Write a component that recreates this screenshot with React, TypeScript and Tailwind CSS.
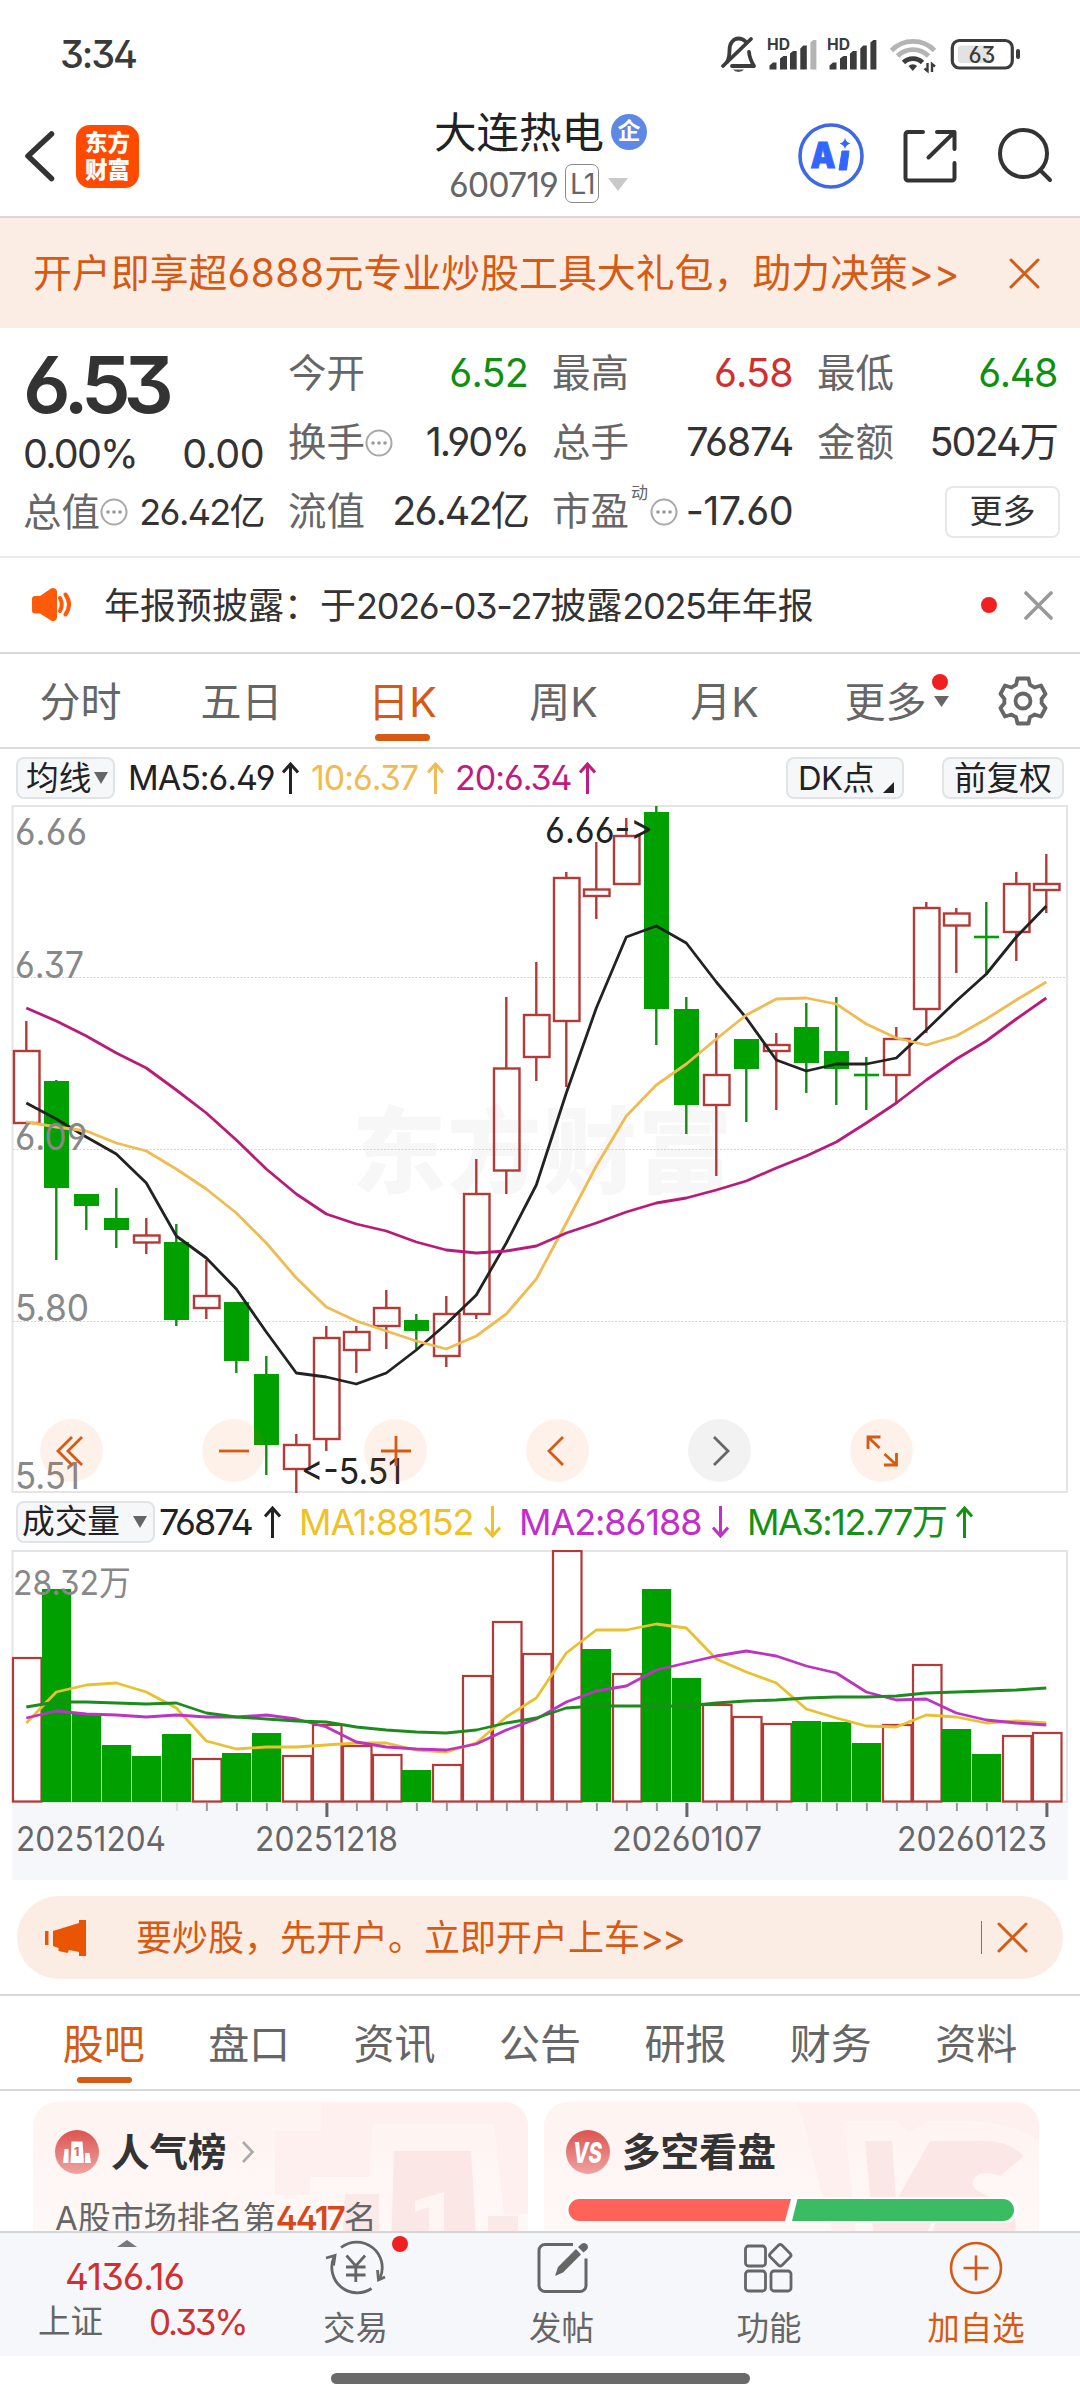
import type { ReactNode } from "react";

const UP = "#b43a37";
const DOWN = "#00a000";

// [up, high, bodyTop, bodyBottom, low] in chart pixels
const candles: [number, number, number, number, number][] = [
  [1, 1021, 1051, 1123, 1123],
  [0, 1080, 1081, 1188, 1260],
  [0, 1194, 1194, 1206, 1230],
  [0, 1188, 1218, 1230, 1248],
  [1, 1218, 1235.5, 1242.5, 1254],
  [0, 1224, 1242, 1320, 1326],
  [1, 1260, 1296, 1308, 1319],
  [0, 1302, 1302, 1361, 1373],
  [0, 1356, 1374, 1445, 1475],
  [1, 1434, 1445, 1469, 1493],
  [1, 1326, 1338, 1439, 1451],
  [1, 1326, 1332, 1350, 1373],
  [1, 1290, 1308, 1326, 1349],
  [0, 1314, 1320, 1331, 1349],
  [1, 1296, 1314, 1356, 1367],
  [1, 1159, 1194, 1314, 1319],
  [1, 997, 1068.5, 1170.5, 1194],
  [1, 962, 1015, 1057, 1081],
  [1, 872, 878, 1021, 1087],
  [1, 842, 889.5, 896, 919],
  [1, 818, 836, 884, 884],
  [0, 806, 812, 1009, 1045],
  [0, 997, 1009, 1105, 1134],
  [1, 1033, 1075, 1105, 1176],
  [0, 1039, 1039, 1069, 1122],
  [1, 1033, 1045, 1051, 1110],
  [0, 1003, 1027, 1063, 1093],
  [0, 997, 1051, 1069, 1105],
  [0, 1057, 1073.7, 1076.3, 1110],
  [1, 1027, 1039, 1075, 1104],
  [1, 902, 908, 1009, 1033],
  [1, 908, 913.5, 925.5, 973],
  [0, 902, 935.7, 938.3, 973],
  [1, 872, 884, 932, 961],
  [1, 854, 884, 890, 913],
];

const ma5 = [1103, 1119, 1137, 1154, 1183, 1236, 1258, 1289, 1332, 1373, 1377, 1384, 1373, 1350, 1324, 1295, 1243, 1185, 1093, 1008, 937, 926, 943, 982, 1018, 1060, 1071, 1064, 1064, 1058, 1030, 1001, 974, 937, 906];
const ma10 = [1122, 1127, 1131, 1143, 1151, 1169, 1189, 1213, 1243, 1278, 1307, 1321, 1331, 1341, 1349, 1336, 1314, 1279, 1223, 1166, 1116, 1085, 1064, 1039, 1015, 999, 998, 1004, 1024, 1038, 1045, 1036, 1019, 1000, 982];
const ma20 = [1008, 1021, 1036, 1053, 1068, 1090, 1113, 1140, 1169, 1194, 1214, 1224, 1231, 1242, 1250, 1253, 1251, 1246, 1233, 1223, 1212, 1203, 1198, 1190, 1181, 1168, 1156, 1142, 1123, 1103, 1080, 1059, 1041, 1019, 998];

const volTops = [1658, 1589, 1713, 1745, 1756, 1734, 1759, 1753, 1733, 1756, 1725, 1746, 1755, 1770, 1765, 1676, 1622, 1654, 1551, 1649, 1674, 1589, 1678, 1705, 1717, 1724, 1721, 1722, 1743, 1725, 1665, 1729, 1754, 1736, 1733];
// volume bars follow the change against the previous close, so a few differ from their candle
const volFlipped = [4, 19, 24, 31];
const vma1 = [1723, 1692, 1685, 1683, 1692, 1708, 1741, 1749, 1747, 1747, 1745, 1743, 1743, 1750, 1752, 1743, 1717, 1698, 1653, 1630, 1630, 1624, 1628, 1659, 1672, 1683, 1709, 1718, 1726, 1727, 1715, 1717, 1723, 1721, 1723];
const vma2 = [1718, 1711, 1714, 1715, 1717, 1715, 1717, 1717, 1715, 1719, 1727, 1742, 1747, 1749, 1750, 1744, 1730, 1719, 1702, 1691, 1686, 1670, 1663, 1656, 1651, 1656, 1666, 1673, 1692, 1700, 1699, 1713, 1720, 1723, 1725];
const vma3 = [1707, 1702, 1702, 1703, 1704, 1703, 1713, 1717, 1719, 1721, 1722, 1727, 1730, 1732, 1733, 1730, 1723, 1718, 1708, 1706, 1706, 1706, 1706, 1703, 1701, 1700, 1698, 1697, 1697, 1696, 1693, 1692, 1691, 1690, 1688];

const x = (i: number) => 26.3 + 30 * i;
const line = (ys: number[]) => ys.map((y, i) => `${x(i)},${y}`).join(" ");

function StatusBar() {
  return (
    <div className="flex h-[108px] items-center justify-between pl-[60px] pr-[58px]">
      <div className="text-[38px] font-medium leading-none tracking-[-0.055em] text-[#3a3a3a]">3:34</div>
      <svg width="304" height="44" viewBox="718 32 304 44" fill="none">
        <g stroke="#3c3c3c" strokeWidth="3.8" strokeLinecap="round">
          <path d="M727 62c2.500-4 2.500-8 2.500-12 0-7 4-11.500 9-11.500 3 0 5 1 7 3M749 52c.3 5 2 9 5 14h-22" strokeLinejoin="round" />
          <path d="M723 66L751 39" />
        </g>
        <path d="M733 69.500h11a6 4 0 0 1-11 0z" fill="#555" />
        {[0, 60].map((dx) => (
          <g key={dx} fill="#3c3c3c">
            <text x={767 + dx} y="50" fontSize="15.500" fontWeight="700" textLength="23" lengthAdjust="spacingAndGlyphs">HD</text>
            <path d={`M${769.5 + dx} 69.500v-4l3.500-3h3.500v7zM${780 + dx} 69.500v-11l3.500-2.500h3.500v13.500zM${790 + dx} 69.500v-16l3-2.500h3.700v18.500zM${800.3 + dx} 69.500v-21l3-3h3.500v24z`} />
            <path d={`M${810.4 + dx} 69.500v-27l3-2.500h3v29.500z`} fill={dx ? "#3c3c3c" : "#b4b4b4"} />
          </g>
        ))}
        <g strokeWidth="4.800" strokeLinecap="butt">
          <path d="M891.500 50.500a30 30 0 0 1 43 0" stroke="#b4b4b4" />
          <path d="M897.500 56a22 22 0 0 1 31 0" stroke="#b4b4b4" />
          <path d="M903.500 62.500a13.500 13.500 0 0 1 19 0" stroke="#3c3c3c" />
        </g>
        <path d="M908.500 66a6.500 6.500 0 0 1 8.600 0l-4.300 5z" fill="#3c3c3c" />
        <path d="M927.500 63v8l-3-2.500M932 72v-8l3 2.500" stroke="#3c3c3c" strokeWidth="2.400" />
        <rect x="952.300" y="40.500" width="60" height="27.500" rx="7" stroke="#3c3c3c" strokeWidth="3.200" />
        <rect x="958" y="45.500" width="31" height="17.500" rx="3" fill="#e2e2e2" />
        <text x="968.500" y="62.500" fontSize="22.500" fontWeight="500" textLength="27" lengthAdjust="spacingAndGlyphs" fill="#3c3c3c">63</text>
        <rect x="1016" y="49" width="4" height="10" rx="2" fill="#3c3c3c" />
      </svg>
    </div>
  );
}

function Header() {
  return (
    <div className="flex h-[110px] items-center border-b-2 border-[#d9d9d9] pl-[23px]">
      <svg className="mt-[-12px] shrink-0" width="34" height="56" viewBox="23 128 34 56" fill="none">
        <path d="M51.500 134L28 156l23.500 22.500" stroke="#333" strokeWidth="5.500" strokeLinecap="round" strokeLinejoin="round" />
      </svg>
      <div className="ml-[19px] mt-[-12px] flex h-[63px] w-[63px] shrink-0 flex-col items-center justify-center rounded-[14px] bg-[#ff4a00] text-[22.500px] font-black leading-[27px] text-white">
        <span>东方</span>
        <span>财富</span>
      </div>
      <div className="ml-[198px] mt-[-9px] w-[460px] shrink-0">
        <div className="flex items-center pl-[97px]">
          <span className="text-[42.500px] leading-[48px] text-[#222]">大连热电</span>
          <span className="ml-[7px] mt-[-2px] flex h-[36px] w-[36px] items-center justify-center rounded-full bg-[#5d88e6] text-[23px] font-bold leading-none text-white">企</span>
        </div>
        <div className="mt-[6px] flex items-center pl-[112px]">
          <span className="w-[116px] text-[34px] leading-[44px] tracking-[-0.03em] text-[#666]">600719</span>
          <span className="mb-[2px] flex h-[39px] w-[34px] items-center justify-center rounded-[7px] border-[1.500px] border-[#8a8a8a] text-[29px] leading-none tracking-[-0.05em] text-[#666]">L1</span>
          <svg className="ml-[9px]" width="20" height="13" viewBox="0 0 20 13">
            <path d="M0 0h20L10 13z" fill="#c9c9c9" />
          </svg>
        </div>
      </div>
      <svg className="mt-[-12px] shrink-0" width="260" height="70" viewBox="797 121 260 70" fill="none">
        <circle cx="831" cy="156" r="31" stroke="#3f68e4" strokeWidth="3.600" />
        <text x="810.500" y="168" fontSize="36" fontWeight="900" fill="#3366ff" stroke="#3366ff" strokeWidth="1" textLength="25" lengthAdjust="spacingAndGlyphs">A</text>
        <path d="M842 151h7l-2.500 19h-7.500z" fill="#3366ff" stroke="#3366ff" strokeWidth="1" strokeLinejoin="round" />
        <path d="M845 138q1.200 4.500 5.500 5.500-4.500 1-5.500 5.500-1.200-4.500-5.500-5.500 4.500-1 5.500-5.500z" fill="#3366ff" />
        <g stroke="#333" strokeWidth="4" strokeLinecap="round" strokeLinejoin="round">
          <path d="M923 132h-15a2.500 2.500 0 0 0-2.500 2.500v43.500a2.500 2.500 0 0 0 2.500 2.500h44a2.500 2.500 0 0 0 2.500-2.500v-15" />
          <path d="M937 132h17.500v17M928.500 157.500L953 133.500" />
          <circle cx="1023.500" cy="153.500" r="23.500" />
          <path d="M1040 170l10 10" />
        </g>
      </svg>
    </div>
  );
}

function Cross({ size, color, stroke }: { size: number; color: string; stroke: number }) {
  return (
    <svg className="shrink-0" width={size} height={size} viewBox={`0 0 ${size} ${size}`}>
      <path d={`M2 2L${size - 2} ${size - 2}M${size - 2} 2L2 ${size - 2}`} stroke={color} strokeWidth={stroke} strokeLinecap="round" />
    </svg>
  );
}

function TopBanner() {
  return (
    <div className="flex h-[110px] items-center justify-between bg-[#fbede4] pl-[33px] pr-[40px] text-[#d65a14]">
      <div className="whitespace-nowrap text-[38.900px] leading-none">
        开户即享超<span className="tracking-[0.015em]">6888</span>元专业炒股工具大礼包，助力决策&gt;&gt;
      </div>
      <Cross size={31} color="#d65a14" stroke={3} />
    </div>
  );
}

function Info() {
  return (
    <svg className="shrink-0" width="28" height="28" viewBox="0 0 28 28">
      <circle cx="14" cy="14" r="12.500" fill="none" stroke="#a8a8a8" strokeWidth="2" />
      <circle cx="8" cy="14" r="1.800" fill="#999" />
      <circle cx="14" cy="14" r="1.800" fill="#999" />
      <circle cx="20" cy="14" r="1.800" fill="#999" />
    </svg>
  );
}

function Stat({ label, value, className = "text-[#333] tracking-[-0.05em]", info = false }: { label: string; value: string; className?: string; info?: boolean }) {
  return (
    <div className="flex h-[69px] items-center justify-between whitespace-nowrap leading-none">
      <span className="flex items-center text-[38.500px] text-[#666]">
        {label}
        {info && <Info />}
      </span>
      <span className={`text-[39.500px] ${className}`}>{value}</span>
    </div>
  );
}

function Quote() {
  return (
    <div className="flex h-[230px] border-b-2 border-[#ebebeb] pl-[23px] pt-[10px]">
      <div className="w-[241px] text-[#333]">
        <div className="flex h-[92px] items-center text-[79px] font-semibold leading-none tracking-[-0.09em]">6.53</div>
        <div className="mt-[2px] flex h-[46px] items-center justify-between text-[39.500px] leading-none">
          <span className="tracking-[-0.045em]">0.00%</span>
          <span className="tracking-[-0.015em]">0.00</span>
        </div>
        <div className="flex h-[68px] items-center justify-between whitespace-nowrap leading-none">
          <span className="flex items-center text-[38.500px] text-[#666]">
            总值
            <Info />
          </span>
          <span className="text-[36px] tracking-[-0.045em]">26.42亿</span>
        </div>
      </div>
      <div className="ml-[24px] mt-[1px] grid h-[207px] grid-cols-[240px_241px_240px] gap-x-[24px]">
        <Stat label="今开" value="6.52" className="tracking-[-0.02em] text-[#109010]" />
        <Stat label="最高" value="6.58" className="tracking-[-0.02em] text-[#d03030]" />
        <Stat label="最低" value="6.48" className="tracking-[-0.035em] text-[#109010]" />
        <Stat label="换手" value="1.90%" info />
        <Stat label="总手" value="76874" className="tracking-[-0.03em] text-[#333]" />
        <Stat label="金额" value="5024万" />
        <Stat label="流值" value="26.42亿" />
        <div className="flex h-[69px] items-center whitespace-nowrap leading-none">
          <span className="text-[38.500px] text-[#666]">市盈</span>
          <span className="mt-[-36px] ml-[2px] text-[17px] text-[#666]">动</span>
          <span className="ml-[2px]"><Info /></span>
          <span className="ml-auto text-[39.500px] tracking-[-0.015em] text-[#333]">-17.60</span>
        </div>
        <div className="flex h-[69px] items-center justify-end">
          <button className="mr-[-3px] flex h-[52px] w-[115px] items-center justify-center rounded-lg border-2 border-[#e6e8ea] text-[33px] leading-none text-[#333]">更多</button>
        </div>
      </div>
    </div>
  );
}

function Notice() {
  return (
    <div className="flex h-[96px] items-center border-b-2 border-[#d9d9d9] pl-[31px] pr-[27px]">
      <svg width="42" height="36" viewBox="31 587 42 36" fill="none">
        <path d="M32 599q0-3 3-3h5l11-7.500q2-1.200 4 0 2 1 2 3v26q0 2-2 3-2 1.200-4 0L40 613.500h-5q-3 0-3-3z" fill="#ff5a0a" />
        <path d="M60 598q3.500 6.500 0 13M65.500 594.500q7 10 0 20" stroke="#ff5a0a" strokeWidth="4" strokeLinecap="round" />
      </svg>
      <div className="ml-[31px] mt-[2px] whitespace-nowrap text-[36px] leading-none text-[#333]">
        年报预披露：于<span className="tracking-[-0.035em]">2026-03-27</span>披露<span className="tracking-[-0.035em]">2025</span>年年报
      </div>
      <div className="ml-auto mr-[27px] h-[16px] w-[16px] rounded-full bg-[#f02020]" />
      <Cross size={29} color="#999" stroke={3.6} />
    </div>
  );
}

function ChartTabs() {
  return (
    <div className="flex h-[95px] border-b-2 border-[#dadada] text-[41px] leading-none text-[#666]">
      {["分时", "五日", "日K", "周K", "月K", "更多"].map((t) => (
        <div key={t} className={`relative flex w-[161px] shrink-0 items-center justify-center pt-[3px] ${t === "日K" ? "text-[#d65a14]" : ""}`}>
          {t}
          {t === "日K" && <span className="absolute bottom-[6px] left-[53px] h-[7px] w-[55px] rounded-full bg-[#d65a14]" />}
          {t === "更多" && (
            <>
              <span className="absolute left-[127px] top-[20px] h-[16px] w-[16px] rounded-full bg-[#f02020]" />
              <svg className="absolute left-[129px] top-[42px]" width="15" height="11" viewBox="0 0 15 11">
                <path d="M0 0h15L7.500 11z" fill="#666" />
              </svg>
            </>
          )}
        </div>
      ))}
      <svg className="ml-[32px] mt-[22px]" width="50" height="50" viewBox="-25 -25 50 50" fill="none" stroke="#666" strokeWidth="3.800" strokeLinejoin="round">
        <path d="M-5.500-22.500h11l1.500 6.500q2.500 1 4.500 2.500l6.500-2 4.500 8.500-4 5q.4 2 0 4l4 5-4.500 8.500-6.500-2q-2 1.500-4.500 2.500l-1.500 6.500h-11l-1.500-6.500q-2.500-1-4.500-2.500l-6.500 2-4.500-8.500 4-5q-.4-2 0-4l-4-5 4.500-8.500 6.500 2q2-1.500 4.500-2.500z" />
        <circle r="7.500" />
      </svg>
    </div>
  );
}

function Arrow({ down = false }: { down?: boolean }) {
  return (
    <svg className={down ? "shrink-0 rotate-180" : "shrink-0"} width="17" height="32" viewBox="0 0 17 32" fill="none" stroke="currentColor" strokeWidth="3">
      <path d="M8.500 32V2M1 10.500L8.500 2l7.500 8.500" />
    </svg>
  );
}

function Chip({ className, children }: { className: string; children: ReactNode }) {
  return (
    <div className={`flex h-[42px] shrink-0 items-center rounded-lg border-2 border-[#e1e4e7] bg-[#f6f7f9] text-[32.700px] leading-none text-[#222] ${className}`}>
      {children}
    </div>
  );
}

function Caret() {
  return (
    <svg className="shrink-0" width="14" height="12" viewBox="0 0 14 12">
      <path d="M0 0h14L7 12z" fill="#666" />
    </svg>
  );
}

function PriceLegend() {
  return (
    <div className="flex h-[56px] items-center whitespace-nowrap pl-[16px] pt-[2px] text-[34px] leading-none">
      <Chip className="w-[99px] pl-[8px]">
        均线
        <span className="ml-[3px]"><Caret /></span>
      </Chip>
      <div className="ml-[13px] flex w-[183px] items-center text-[#222]">
        <span className="w-[154px] tracking-[-0.03em]">MA5:6.49</span>
        <Arrow />
      </div>
      <div className="flex w-[144px] items-center text-[#f0bb52]">
        <span className="w-[116px] tracking-[-0.03em]">10:6.37</span>
        <Arrow />
      </div>
      <div className="flex w-[331px] items-center text-[#c01c7e]">
        <span className="w-[124px] tracking-[-0.03em]">20:6.34</span>
        <Arrow />
      </div>
      <Chip className="w-[118px] pl-[10px]">
        <span className="tracking-[-0.02em]">DK点</span>
        <svg className="ml-[9px] mt-[18px]" width="11" height="11" viewBox="0 0 11 11">
          <path d="M11 0v11H0z" fill="#222" />
        </svg>
      </Chip>
      <Chip className="ml-[38px] w-[122px] justify-center">前复权</Chip>
    </div>
  );
}

function PriceChart() {
  return (
    <div className="relative h-[688px]">
      <svg width="1080" height="688" viewBox="0 805 1080 688" fill="none">
        <text x="352" y="1186" fontSize="94" fontWeight="800" fill="#f7f7f7" textLength="380">东方财富</text>
        {[977.5, 1149.5, 1321.5].map((y) => (
          <path key={y} d={`M13 ${y}H1067`} stroke="#d4d4d4" strokeWidth="1" strokeDasharray="2 1.500" />
        ))}
        <rect x="12.500" y="806" width="1054.500" height="686" stroke="#e4e4e4" strokeWidth="2" />
        {candles.map(([up, high, top, bottom, low], i) =>
          up ? (
            <g key={i} stroke={UP} strokeWidth="2.400">
              <path d={`M${x(i)} ${high}V${top}M${x(i)} ${bottom}V${low}`} />
              <rect x={x(i) - 12.3} y={top} width="25.500" height={bottom - top} />
            </g>
          ) : (
            <g key={i}>
              <path d={`M${x(i)} ${high}V${low}`} stroke="#128c12" strokeWidth="2.400" />
              <rect x={x(i) - 12.3} y={top} width="25" height={bottom - top} fill={DOWN} />
            </g>
          )
        )}
        <g strokeWidth="2.800" strokeLinejoin="round">
          <polyline points={line(ma5)} stroke="#222" />
          <polyline points={line(ma10)} stroke="#f0bb52" />
          <polyline points={line(ma20)} stroke="#b81c78" />
        </g>
        <g fontSize="36.500" fill="#888">
          <text x="15" y="845" textLength="72" lengthAdjust="spacingAndGlyphs">6.66</text>
          <text x="15" y="978" textLength="69" lengthAdjust="spacingAndGlyphs">6.37</text>
          <text x="15" y="1149.500" textLength="72" lengthAdjust="spacingAndGlyphs">6.09</text>
          <text x="15" y="1321" textLength="74" lengthAdjust="spacingAndGlyphs">5.80</text>
          <text x="15" y="1489" textLength="65" lengthAdjust="spacingAndGlyphs">5.51</text>
        </g>
        {/* contextual alternates would join "->" into one arrow glyph */}
        <g fontSize="36" fill="#222" className="[font-feature-settings:'ss01','cv09','calt'_0,'case']">
          <text x="545" y="842.500" textLength="108" lengthAdjust="spacingAndGlyphs">6.66-&gt;</text>
          <text x="301" y="1484" textLength="101" lengthAdjust="spacingAndGlyphs">&lt;-5.51</text>
        </g>
      </svg>
      <div className="absolute bottom-[11px] left-[40px] flex gap-[99px]">
        {["first", "minus", "plus", "prev", "next", "expand"].map((k) => (
          <button key={k} className={`flex h-[63px] w-[63px] items-center justify-center rounded-full ${k === "next" ? "bg-black/5" : "bg-[#f06018]/9"}`}>
            <svg width="34" height="34" viewBox="-17 -17 34 34" fill="none" stroke={k === "next" ? "#666" : "#d65a14"} strokeWidth="2.800">
              {k === "first" && <path d="M0-14L-14 0 0 14M10-14L-4 0 10 14" />}
              {k === "minus" && <path d="M-15 0h30" />}
              {k === "plus" && <path d="M-15 0h30M0-15v30" />}
              {k === "prev" && <path d="M5-14L-9 0 5 14" />}
              {k === "next" && <path d="M-6-14L8 0-6 14" />}
              {k === "expand" && <path d="M-1.500-14h-12.500v12M-14-14l11.500 11M2 14h12.500v-12M14.500 14L2.500 3" />}
            </svg>
          </button>
        ))}
      </div>
    </div>
  );
}

function VolumeLegend() {
  return (
    <div className="flex h-[57px] items-center whitespace-nowrap pl-[16px] text-[36px] leading-none">
      <Chip className="w-[139px] pl-[4px]">
        <span className="text-[32.700px]">成交量</span>
        <span className="ml-[13px]"><Caret /></span>
      </Chip>
      <div className="ml-[4px] flex w-[140px] items-center text-[#222]">
        <span className="w-[105px] tracking-[-0.055em]">76874</span>
        <Arrow />
      </div>
      <div className="flex w-[220px] items-center text-[#eec226]">
        <span className="w-[185px] tracking-[-0.03em]">MA1:88152</span>
        <Arrow down />
      </div>
      <div className="flex w-[228px] items-center text-[#c42ccb]">
        <span className="w-[193px] tracking-[-0.03em]">MA2:86188</span>
        <Arrow down />
      </div>
      <div className="flex items-center text-[#149014]">
        <span className="w-[209px] tracking-[-0.04em]">MA3:12.77万</span>
        <Arrow />
      </div>
    </div>
  );
}

function VolumeChart() {
  return (
    <svg className="shrink-0" width="1080" height="330" viewBox="0 1550 1080 330" fill="none">
      <rect x="12" y="1803" width="1056" height="77" fill="#f6f7fa" />
      <rect x="12.500" y="1551" width="1054.500" height="251" stroke="#e4e4e4" strokeWidth="2" />
      {volTops.map((top, i) => {
        const up = !!candles[i][0] !== volFlipped.includes(i);
        return up ? (
          <rect key={i} x={x(i) - 13.3} y={top} width="28.500" height={1801.5 - top} stroke={UP} strokeWidth="2.200" />
        ) : (
          <rect key={i} x={x(i) - 14.3} y={top} width="29.200" height={1802 - top} fill={DOWN} />
        );
      })}
      <g strokeWidth="2.800" strokeLinejoin="round">
        <polyline points={line(vma1)} stroke="#e8c030" />
        <polyline points={line(vma2)} stroke="#bc34c4" />
        <polyline points={line(vma3)} stroke="#1c8c1c" />
      </g>
      {volTops.map((_, i) => {
        if (i < 5) return null;
        const major = i === 10 || i === 22 || i === 34;
        return (
          <path key={i} d={`M${x(i) + 0.6} 1803v${major ? 14 : 8}`} stroke={i === 5 ? "#ddd" : major ? "#666" : "#999"} strokeWidth={major ? 3 : 2} />
        );
      })}
      <text x="13" y="1595" fontSize="34.500" fill="#888" textLength="118" lengthAdjust="spacingAndGlyphs">28.32万</text>
      <g fontSize="33.500" fill="#666">
        <text x="16" y="1850.500" textLength="150" lengthAdjust="spacingAndGlyphs">20251204</text>
        <text x="255" y="1850.500" textLength="143" lengthAdjust="spacingAndGlyphs">20251218</text>
        <text x="612" y="1850.500" textLength="150" lengthAdjust="spacingAndGlyphs">20260107</text>
        <text x="897" y="1850.500" textLength="150" lengthAdjust="spacingAndGlyphs">20260123</text>
      </g>
    </svg>
  );
}

function Promo() {
  return (
    <div className="mx-[17px] mt-[16px] flex h-[83px] shrink-0 items-center rounded-full bg-[#fcede4] pl-[27px] pr-[35px] text-[#d65a14]">
      <svg width="44" height="38" viewBox="44 1919 44 38" fill="#ea5504">
        <path d="M45 1931h3.500v14H45zM53 1931l26-8v-3h7v36h-7v-4l-10-2-1.500 3-9-2v-3l-5.500-2z" />
      </svg>
      <div className="ml-[48px] whitespace-nowrap text-[36px] leading-none">
        要炒股，先开户。立即开户上车<span className="tracking-[-0.05em]">&gt;&gt;</span>
      </div>
      <div className="ml-auto mr-[15px] h-[33px] w-px bg-[#d65a14]" />
      <Cross size={31} color="#d65a14" stroke={3} />
    </div>
  );
}

function InfoTabs() {
  return (
    <div className="mt-[15px] flex h-[97px] shrink-0 border-y-2 border-[#d9d9d9] px-[31px] text-[41px] leading-none text-[#666]">
      {["股吧", "盘口", "资讯", "公告", "研报", "财务", "资料"].map((t, i) => (
        <div key={t} className={`relative flex flex-1 items-center justify-center pt-[3px] ${i === 0 ? "text-[#d65a14]" : ""}`}>
          {t}
          {i === 0 && <span className="absolute bottom-[6px] left-[46px] h-[6px] w-[55px] rounded-full bg-[#d65a14]" />}
        </div>
      ))}
    </div>
  );
}

function Cards() {
  return (
    <div className="flex h-[140px] shrink-0 gap-[16px] overflow-hidden pl-[33px] pt-[11px]">
      <div className="relative h-[180px] w-[495px] shrink-0 overflow-hidden rounded-[24px] bg-linear-to-b from-[#fef4f2] to-[#fffaf8]">
        <svg className="absolute right-0 top-0" width="256" height="180" viewBox="272 2102 256 180">
          <path d="M321 2102h207v112h-24l-10-90H373l-4 53h-59v18h-35v-64h46z" fill="#fdf0ee" />
          <path d="M394 2151h77l6 100h-86z" fill="#fbe7e5" />
          <path d="M345 2194h34v60h-38zM488 2216h30v40h-30z" fill="#fbe9e7" />
          <path d="M415 2201l29-9v50h-15v-35l-14 5z" fill="#fff6f4" />
        </svg>
        <div className="relative flex h-[100px] items-center pl-[22px]">
          <svg width="44" height="44" viewBox="0 0 44 44">
            <defs>
              <linearGradient id="badge" x1="0" y1="0" x2="0" y2="1">
                <stop offset="0" stopColor="#dc5350" />
                <stop offset="1" stopColor="#f0a3a0" />
              </linearGradient>
            </defs>
            <circle cx="22" cy="22" r="22" fill="url(#badge)" />
            <path d="M8 33l1.500-14h4v14zM15.500 33l1-21.500h11l1.500 21.500zM30 33v-10h4.500l1.500 10z" fill="#fff" />
            <text x="19" y="26" fontSize="12" fontWeight="800" fill="#e06a67">1</text>
          </svg>
          <span className="ml-[12px] text-[38.500px] font-bold leading-none text-[#333]">人气榜</span>
          <svg className="ml-[14px]" width="14" height="24" viewBox="0 0 14 24" fill="none">
            <path d="M2 2l9.500 10L2 22" stroke="#aaa" strokeWidth="2.600" />
          </svg>
        </div>
        <div className="relative mt-[-2px] whitespace-nowrap pl-[22px] text-[33px] leading-[36px] text-[#666]">
          A股市场排名第<span className="font-semibold tracking-[-0.06em] text-[#d4481c]">4417</span>名
        </div>
      </div>
      <div className="relative h-[180px] w-[495px] shrink-0 overflow-hidden rounded-[24px] bg-linear-to-b from-[#fef4f2] to-[#fffaf8]">
        <svg className="absolute right-0 top-0" width="250" height="180" viewBox="789 2102 250 180">
          <path d="M798 2102h241v38q-36-22-90-19h-20l-20 11-12-11h-53l12 111h-24z" fill="#fdf0ee" />
          <path d="M865 2141h27l4 60 34-60h50l-32 40-28 70h-45z" fill="#fbe7e5" />
          <path d="M1024 2156l-24 20q-14-6-24 0-8 8 2 15l28 14q14 10 8 34h-84l10-28-10-20q14-50 54-50 26 0 40 15z" fill="#fbe7e5" />
        </svg>
        <div className="relative flex h-[100px] items-center pl-[22px]">
          <svg width="44" height="44" viewBox="0 0 44 44">
            <circle cx="22" cy="22" r="22" fill="url(#badge)" />
            <text x="7" y="32.500" fontSize="29" fontWeight="800" fontStyle="italic" fill="#fff" textLength="29" lengthAdjust="spacingAndGlyphs">VS</text>
          </svg>
          <span className="ml-[12px] text-[38.500px] font-bold leading-none text-[#333]">多空看盘</span>
        </div>
        <svg className="absolute left-[22px] top-[95px]" width="452" height="26" viewBox="0 0 452 26">
          <rect width="452" height="26" rx="13" fill="#fff" />
          <path d="M13.500 2H225l-6 22H13.500a11 11 0 0 1 0-22z" fill="#ff6357" />
          <path d="M231.500 2H437a11 11 0 0 1 0 22H226z" fill="#3cbc62" />
        </svg>
      </div>
    </div>
  );
}

function NavItem({ label, className, children }: { label: string; className: string; children: ReactNode }) {
  return (
    <div className={`relative flex shrink-0 flex-col items-center pt-[6px] ${className}`}>
      {children}
      <span className="mt-[12px] text-[32.500px] leading-[40px]">{label}</span>
    </div>
  );
}

function BottomNav() {
  return (
    <div className="flex h-[125px] shrink-0 border-t-2 border-[#d5d6d9] bg-[#f6f7fa] text-[#666]">
      <div className="w-[252px] shrink-0 pt-[7px]">
        <svg className="ml-[117px]" width="20" height="7" viewBox="0 0 20 7">
          <path d="M0 7L10 0l10 7z" fill="#77787c" />
        </svg>
        <div className="mt-[7px] pl-[65px] text-[37px] leading-[46px] tracking-[-0.03em] text-[#d03030]">4136.16</div>
        <div className="mt-[2px] flex items-center pl-[38px] leading-[40px]">
          <span className="w-[111px] text-[32.500px]">上证</span>
          <span className="text-[35px] tracking-[-0.06em] text-[#d03030]">0.33%</span>
        </div>
      </div>
      <NavItem label="交易" className="w-[207px]">
        <svg width="62" height="58" viewBox="325 2239 62 58" fill="none" stroke="#666" strokeWidth="2.800">
          <path d="M341 2247.500A25.500 25.500 0 0 1 380 2278M371.500 2288.500A25.500 25.500 0 0 1 334 2257" />
          <path d="M326 2258l9-2.500-1.500 10M385 2277l-6.500 3-1-10" />
          <path d="M346.500 2255.500l9.300 10.500 9.300-10.500M355.800 2266v16M346 2267h19.500M346 2275h19.500" />
        </svg>
        <span className="absolute left-[140px] top-[3px] h-[16px] w-[16px] rounded-full bg-[#f02020]" />
      </NavItem>
      <NavItem label="发帖" className="w-[205px]">
        <svg width="58" height="58" viewBox="532 2239 58 58" fill="none" stroke="#666" strokeWidth="3">
          <path d="M572 2244.500h-28a6 6 0 0 0-6 6v35a6 6 0 0 0 6 6h35a6 6 0 0 0 6-6v-27" />
          <path d="M554 2276l3-9 18-18 5 5.500-18 18zM577 2247l4-3.500q3-1.500 5 1t0 5l-3.500 3z" fill="#666" stroke="none" />
        </svg>
      </NavItem>
      <NavItem label="功能" className="w-[210px]">
        <svg width="58" height="58" viewBox="741 2239 58 58" fill="none" stroke="#666" strokeWidth="2.800">
          <rect x="746.500" y="2246" width="20" height="20" rx="3" />
          <rect x="746.500" y="2271" width="20" height="20" rx="3" />
          <rect x="772" y="2271" width="20" height="20" rx="3" />
          <rect x="773" y="2247" width="16.500" height="16.500" rx="2.500" transform="rotate(45 781.250 2255.250)" />
        </svg>
      </NavItem>
      <NavItem label="加自选" className="w-[204px] text-[#d65a14]">
        <svg width="58" height="58" viewBox="-29 -29 58 58" fill="none" stroke="#d65a14" strokeWidth="2.600">
          <circle r="25" />
          <path d="M-12.500 0h25M0-12.500v25" />
        </svg>
      </NavItem>
    </div>
  );
}

export default function App() {
  return (
    <div className="flex h-[2400px] w-[1080px] flex-col overflow-hidden bg-white font-['Inter','Noto_Sans_CJK_SC',sans-serif] [font-feature-settings:'ss01','cv09']">
      <StatusBar />
      <Header />
      <TopBanner />
      <Quote />
      <Notice />
      <ChartTabs />
      <PriceLegend />
      <PriceChart />
      <VolumeLegend />
      <VolumeChart />
      <Promo />
      <InfoTabs />
      <Cards />
      <BottomNav />
      <div className="flex h-[44px] shrink-0 justify-center pt-[17px]">
        <div className="h-[11px] w-[419px] rounded-full bg-[#6a6a6a]" />
      </div>
    </div>
  );
}
